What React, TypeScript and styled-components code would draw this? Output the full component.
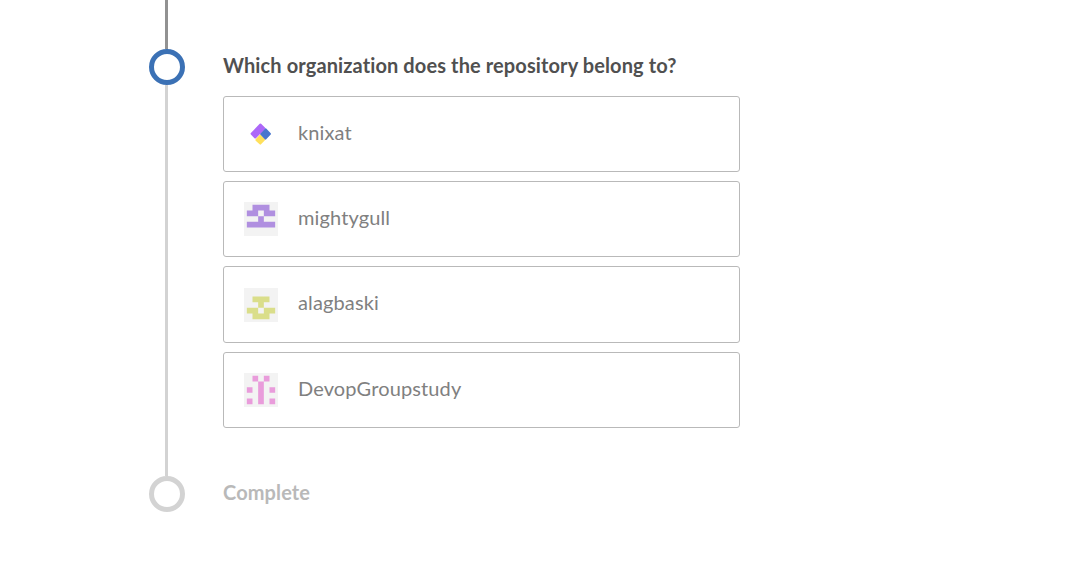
import React from 'react';
import styled, { createGlobalStyle } from 'styled-components';

const GlobalStyle = createGlobalStyle`
  body { margin: 0; background: #fff; font-family: Lato, sans-serif; }
  * { box-sizing: border-box; }
`;

const Page = styled.main`
  display: flex;
  height: 561px;
  padding-left: 149px;
  overflow: hidden;
`;

const Rail = styled.div`
  display: flex;
  flex-direction: column;
  align-items: center;
  width: 36px;
  margin-right: 38px;
`;

const Track = styled.div<{ $length: number; $color: string }>`
  width: 3px;
  height: ${p => p.$length}px;
  margin-right: 1px;
  background: ${p => p.$color};
`;

const Ring = styled.div<{ $color: string }>`
  width: 36px;
  height: 36px;
  border: 5px solid ${p => p.$color};
  border-radius: 50%;
`;

const Content = styled.section`
  width: 517px;
  padding-top: 53px;
`;

const StepTitle = styled.h2<{ $muted?: boolean }>`
  margin: 0;
  font-size: 20px;
  font-weight: 700;
  line-height: 24px;
  letter-spacing: 0.11px;
  white-space: nowrap;
  color: ${p => (p.$muted ? '#b9b9b9' : '#505050')};
`;

const OrgList = styled.div`
  display: flex;
  flex-direction: column;
  gap: 9px;
  margin: 19px 0 52px;
`;

const OrgCard = styled.button<{ $height: number }>`
  display: flex;
  align-items: flex-start;
  height: ${p => p.$height}px;
  padding: ${p => p.$height - 56}px 20px 0;
  border: 1px solid #b9b9b9;
  border-radius: 3px;
  background: #fff;
  font-family: inherit;
`;

const Avatar = styled.svg`
  display: block;
  width: 34px;
  height: 34px;
  margin-right: 20px;
`;

const OrgName = styled.span<{ $lift: number }>`
  font-size: 20px;
  line-height: 24px;
  letter-spacing: 0.13px;
  margin-top: ${p => 3 - p.$lift}px;
  color: #808080;
`;

const KnixatLogo = () => (
  <Avatar viewBox="0 0 34 34">
    <g strokeWidth="2" strokeLinejoin="round">
      <path d="M16.2 18.6 20.2 22.6 16.3 26.6 12.4 22.9Z" fill="#ffe05c" stroke="#ffe05c" />
      <path d="M21.5 12.2 26 16.9 21.5 21.6 17 16.9Z" fill="#4976ce" stroke="#4976ce" />
      <path d="M16.4 7.5 20.2 11.3 11.2 20.5 7.6 16.7Z" fill="#ad68f8" stroke="#ad68f8" />
    </g>
  </Avatar>
);

const Identicon = ({ rows, color }: { rows: string[]; color: string }) => (
  <Avatar viewBox="0 0 12 12">
    <rect width="12" height="12" fill="#f3f3f3" />
    <path
      fill={color}
      d={rows
        .flatMap((row, y) =>
          [...row].map((cell, x) => (cell === '#' ? `M${x * 2 + 1} ${y * 2 + 1}h2v2h-2z` : '')),
        )
        .join('')}
    />
  </Avatar>
);

const orgs = [
  { name: 'knixat', height: 76, avatar: <KnixatLogo /> },
  {
    name: 'mightygull',
    height: 76,
    avatar: <Identicon color="#b08fe0" rows={['.###.', '##.##', '..#..', '#####', '.....']} />,
  },
  {
    name: 'alagbaski',
    height: 77,
    avatar: <Identicon color="#dade8a" rows={['.....', '.###.', '..#..', '##.##', '.###.']} />,
  },
  {
    name: 'DevopGroupstudy',
    height: 76,
    avatar: <Identicon color="#e99cdb" rows={['.#.#.', '..#..', '#.#.#', '..#..', '#.#.#']} />,
  },
];

export default function App() {
  return (
    <>
      <GlobalStyle />
      <Page>
        <Rail>
          <Track $length={49} $color="#929292" />
          <Ring $color="#3b71b5" />
          <Track $length={391} $color="#d3d3d3" />
          <Ring $color="#d3d3d3" />
        </Rail>
        <Content>
          <StepTitle>Which organization does the repository belong to?</StepTitle>
          <OrgList>
            {orgs.map(org => (
              <OrgCard key={org.name} $height={org.height}>
                {org.avatar}
                <OrgName $lift={org.height - 76}>{org.name}</OrgName>
              </OrgCard>
            ))}
          </OrgList>
          <StepTitle $muted>Complete</StepTitle>
        </Content>
      </Page>
    </>
  );
}
